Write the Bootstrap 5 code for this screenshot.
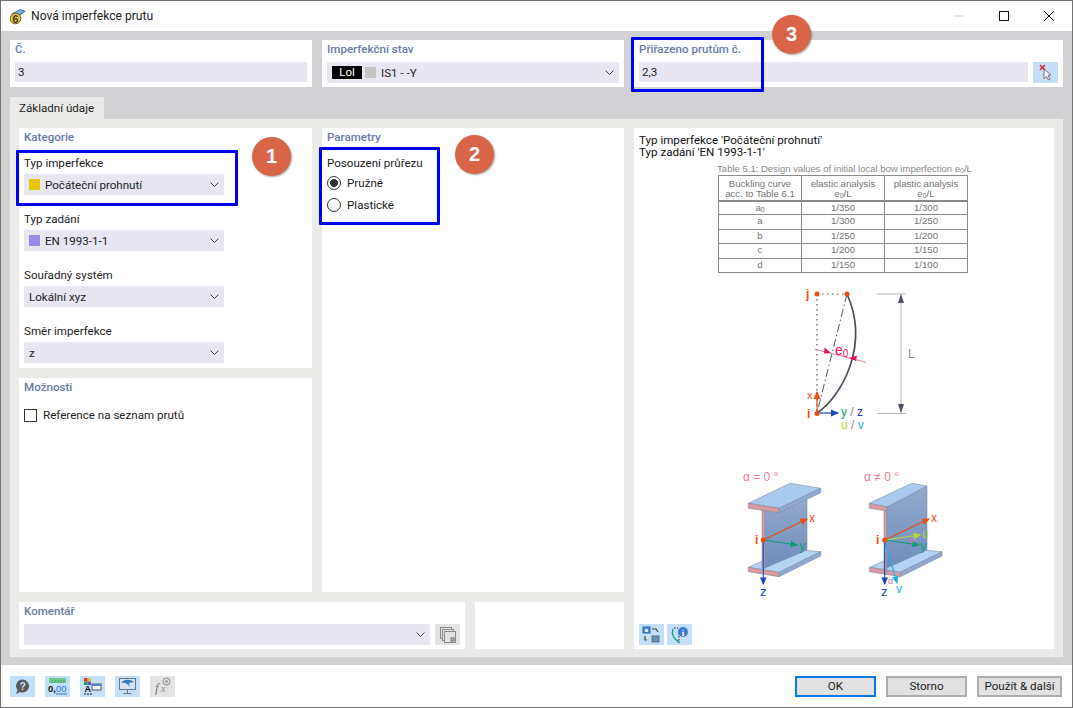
<!DOCTYPE html>
<html lang="cs">
<head>
  <meta charset="UTF-8" />
  <title>Nová imperfekce prutu</title>
  <link href="https://cdn.jsdelivr.net/npm/bootstrap@5.3.0/dist/css/bootstrap.min.css" rel="stylesheet"/>
  <style>
    html, body { margin: 0; background: #fff; }
    body { font-family: Roboto, "Noto Sans", sans-serif; font-size: 11.6px; line-height: 16px; color: #1c1c1c; }
    .win { position: relative; width: 1073px; height: 708px; border: 1px solid #737373; overflow: hidden; background: #fff; }

    .title-bar { height: 30px; padding-left: 9px; font-size: 12.1px; }
    .title-bar .ttl { margin-left: 3px; }
    .win-btns { margin-left: auto; margin-right: 18px; gap: 35px; }

    .main-area { height: 634px; background: #d2d2d5; padding: 9px 9px 8px 9px; }
    .top-grid { display: grid; grid-template-columns: 302px 302px 429px; gap: 10px; height: 47px; margin-bottom: 10px; }
    .pane { background: #fff; padding: 1px 5px 0 5px; }
    .pane-head { font-weight: 500; color: #6a7ba6; height: 16px; }
    .top-grid .pane-head { margin-bottom: 5px; }

    .tab-lbl { width: 94px; height: 22px; background: #ebebe9; padding-left: 9px; padding-top: 3px; }
    .tab-body { height: 538px; background: #ebebe9; padding: 9px; display: grid; grid-template-columns: 293px 302px 420px; grid-template-rows: 240px 214px 47px; gap: 10px; }
    .cell-cat { grid-column: 1; grid-row: 1; }
    .cell-opt { grid-column: 1; grid-row: 2; }
    .cell-par { grid-column: 2; grid-row: 1 / span 2; }
    .right-pane { grid-column: 3; grid-row: 1 / span 3; padding: 6px 4px 4px 5px; }
    .bottom-row { grid-column: 1 / span 2; grid-row: 3; display: grid; grid-template-columns: 446px 149px; gap: 10px; }

    .fld { background: #e7e6f1; height: 20px; min-height: 0; border: 0; border-radius: 0; padding: 0 3px; font-size: 11.6px; line-height: 20px; color: #1c1c1c; }
    .fld:focus { background: #e7e6f1; box-shadow: none; }
    .drop { background: #e7e6f1; height: 21px; padding: 0 5px; width: 200px; }
    .drop.wide { width: 100%; }
    .drop.full { width: 406px; }
    .drop svg.chev { margin-left: auto; }
    .swatch { width: 11px; height: 11px; margin-right: 5px; }
    .sw-yellow { background: #e6c700; }
    .sw-purple { background: #9c8ae8; }
    .sw-grey { background: #c4c4c2; }
    .lol-tag { background: #000; color: #fff; width: 30px; height: 13px; line-height: 13px; text-align: center; margin-right: 3px; }

    .grp-head { margin-bottom: 10px; }
    .fld-grp { margin-bottom: 16px; }
    .fld-lbl { height: 16px; margin-bottom: 3px; }

    .form-check.rf-check { min-height: 0; padding-left: 0; margin: 0; height: 22px; display: flex; align-items: center; }
    .rf-check .form-check-input { float: none; margin: 0 6px 0 0; width: 14px; height: 14px; border: 1px solid #333; background-color: #fff; flex: none; }
    .rf-check .form-check-input[type=radio]:checked { background-image: radial-gradient(circle, #333 0 3.6px, transparent 4.2px); border-color: #333; background-color: #fff; }
    .rf-check .form-check-label { line-height: 16px; }
    .rf-check .form-check-input[type=checkbox] { border-radius: 0; width: 13px; height: 13px; }
    .form-check.rf-check.opt-gap { margin-top: 9px; }
    .sec-lbl { height: 16px; margin-top: 10px; margin-bottom: 1px; }

    .ico-btn { width: 25px; height: 21px; background: #c3e0f8; flex: none; }
    .ico-btn.off { background: #e3e3e3; }

    .pick-row { gap: 5px; }
    .cmt-head { margin-bottom: 5px; }

    .info-line { line-height: 12px; color: #111; }
    .norm-cap { font-family: "Liberation Sans", sans-serif; font-size: 9.5px; line-height: 12px; color: #8a8a8a; text-align: center; margin-top: 5px; margin-bottom: 0; white-space: nowrap; }
    .norm-cap sub, .norm-tbl sub { font-size: 7px; bottom: -0.2em; }
    table.norm-tbl { width: 250px; margin: 0 0 0 79px; table-layout: fixed; font-family: "Liberation Sans", sans-serif; font-size: 9.6px; line-height: 11px; border-color: #8a8a8a; }
    table.norm-tbl > * > * > * { padding: 0; color: #757575; text-align: center; background: transparent; height: 14.4px; border: 1px solid #8a8a8a; line-height: 11px; }
    table.norm-tbl thead th { font-weight: 400; height: 25px; border-bottom-width: 2px; line-height: 10.5px; }
    .fig-wrap { margin-top: 8px; margin-left: 75px; height: 324px; }
    .fig-wrap svg { display: block; }
    .fig-tools { gap: 3px; margin-top: auto; }

    .foot-bar { height: 42px; padding: 0 10px 0 9px; }
    .foot-icons { gap: 10px; }
    .foot-btns { margin-left: auto; gap: 10px; }
    .btn.dlg-btn { width: 81px; height: 21px; padding: 0; border-radius: 0; background: #e1e1e1; border: 2px solid #adadad; font-size: 11.6px; line-height: 16px; color: #1c1c1c; }
    .btn.dlg-btn.pri { border-color: #0a78e6; }
    .btn.dlg-btn.nxt { width: 85px; }

    .mark-box { position: absolute; border: 3px solid #0000f0; border-radius: 1px; pointer-events: none; }
    .mark-1 { left: 15px; top: 149px; width: 222px; height: 56px; }
    .mark-2 { left: 318px; top: 146px; width: 121px; height: 78px; }
    .mark-3 { left: 630px; top: 36px; width: 133px; height: 55px; }
    .num-dot { position: absolute; width: 39px; height: 39px; border-radius: 50%; background: #d96548; color: #fff; font-family: "Liberation Sans", sans-serif; font-weight: 700; font-size: 20px; line-height: 38px; text-align: center; box-shadow: 1px 1px 2px rgba(90, 90, 90, .55); }
    .dot-1 { left: 251px; top: 136px; }
    .dot-2 { left: 454px; top: 134px; }
    .dot-3 { left: 771px; top: 14px; }
  </style>
</head>
<body>
<div class="win d-flex flex-column">

  <!-- title bar -->
  <div class="title-bar d-flex align-items-center">
    <svg width="18" height="17" viewBox="0 0 18 17">
      <path d="M1 6L10 1L16 3L8 9Z" fill="#3f78b5"/>
      <path d="M3 6L10 2L14 3.500L7 7.500Z" fill="#7fb0dc"/>
      <circle cx="5.500" cy="10.500" r="5.300" fill="#e6c93a" stroke="#6b5a10"/>
      <text x="5.500" y="14.500" font-size="10.500" font-weight="700" text-anchor="middle" fill="#3a3a20" font-family="Liberation Sans">6</text>
    </svg>
    <span class="ttl">Nová imperfekce prutu</span>
    <div class="win-btns d-flex align-items-center">
      <svg width="10" height="10" viewBox="0 0 10 10"><path d="M0 5H10" stroke="#cfcfcf"/></svg>
      <svg width="10" height="10" viewBox="0 0 10 10"><rect x=".5" y=".5" width="9" height="9" fill="none" stroke="#111"/></svg>
      <svg width="10" height="10" viewBox="0 0 10 10"><path d="M0 0L10 10M10 0L0 10" stroke="#111"/></svg>
    </div>
  </div>

  <div class="main-area">
    <!-- top fields -->
    <div class="top-grid">
      <div class="pane">
        <div class="pane-head">Č.</div>
        <input class="form-control fld" type="text" value="3">
      </div>
      <div class="pane">
        <div class="pane-head">Imperfekční stav</div>
        <div class="drop wide d-flex align-items-center">
          <span class="lol-tag">Lol</span><span class="swatch sw-grey"></span><span>IS1 - -Y</span>
          <svg class="chev" width="9" height="6" viewBox="0 0 9 6"><path d="M.5 .5L4.500 4.500L8.500 .5" fill="none" stroke="#444"/></svg>
        </div>
      </div>
      <div class="pane">
        <div class="pane-head">Přiřazeno prutům č.</div>
        <div class="d-flex pick-row">
          <input class="form-control fld flex-grow-1" type="text" value="2,3">
          <div class="ico-btn d-flex align-items-center justify-content-center">
            <svg width="17" height="17" viewBox="0 0 17 17">
              <path d="M7 5L7 15L9.500 12.500L11.500 16L13 15L11 11.500L14 11Z" fill="#f4f4f4" stroke="#777"/>
              <path d="M3 1L8 6M8 1L3 6" stroke="#e8202a" stroke-width="1.600"/>
            </svg>
          </div>
        </div>
      </div>
    </div>

    <div class="tab-lbl">Základní údaje</div>
    <div class="tab-body">

      <!-- category -->
      <div class="pane cell-cat">
        <div class="pane-head grp-head">Kategorie</div>
        <div class="fld-grp">
          <div class="fld-lbl">Typ imperfekce</div>
          <div class="drop d-flex align-items-center"><span class="swatch sw-yellow"></span><span>Počáteční prohnutí</span>
            <svg class="chev" width="9" height="6" viewBox="0 0 9 6"><path d="M.5 .5L4.500 4.500L8.500 .5" fill="none" stroke="#444"/></svg></div>
        </div>
        <div class="fld-grp">
          <div class="fld-lbl">Typ zadání</div>
          <div class="drop d-flex align-items-center"><span class="swatch sw-purple"></span><span>EN 1993-1-1</span>
            <svg class="chev" width="9" height="6" viewBox="0 0 9 6"><path d="M.5 .5L4.500 4.500L8.500 .5" fill="none" stroke="#444"/></svg></div>
        </div>
        <div class="fld-grp">
          <div class="fld-lbl">Souřadný systém</div>
          <div class="drop d-flex align-items-center"><span>Lokální xyz</span>
            <svg class="chev" width="9" height="6" viewBox="0 0 9 6"><path d="M.5 .5L4.500 4.500L8.500 .5" fill="none" stroke="#444"/></svg></div>
        </div>
        <div class="fld-grp">
          <div class="fld-lbl">Směr imperfekce</div>
          <div class="drop d-flex align-items-center"><span>z</span>
            <svg class="chev" width="9" height="6" viewBox="0 0 9 6"><path d="M.5 .5L4.500 4.500L8.500 .5" fill="none" stroke="#444"/></svg></div>
        </div>
      </div>

      <!-- parameters -->
      <div class="pane cell-par">
        <div class="pane-head">Parametry</div>
        <div class="sec-lbl">Posouzení průřezu</div>
        <div class="form-check rf-check">
          <input class="form-check-input" type="radio" name="posouzeni" id="pruzne" checked>
          <label class="form-check-label" for="pruzne">Pružné</label>
        </div>
        <div class="form-check rf-check">
          <input class="form-check-input" type="radio" name="posouzeni" id="plasticke">
          <label class="form-check-label" for="plasticke">Plastické</label>
        </div>
      </div>

      <!-- preview -->
      <div class="pane right-pane d-flex flex-column">
        <div class="info-line">Typ imperfekce 'Počáteční prohnutí'</div>
        <div class="info-line">Typ zadání 'EN 1993-1-1'</div>
        <p class="norm-cap">Table 5.1: Design values of initial local bow imperfection e<sub>0</sub>/L</p>
        <table class="table table-bordered norm-tbl">
          <thead>
            <tr><th>Buckling curve<br>acc. to Table 6.1</th><th>elastic analysis<br>e<sub>0</sub>/L</th><th>plastic analysis<br>e<sub>0</sub>/L</th></tr>
          </thead>
          <tbody>
            <tr><td>a<sub>0</sub></td><td>1/350</td><td>1/300</td></tr>
            <tr><td>a</td><td>1/300</td><td>1/250</td></tr>
            <tr><td>b</td><td>1/250</td><td>1/200</td></tr>
            <tr><td>c</td><td>1/200</td><td>1/150</td></tr>
            <tr><td>d</td><td>1/150</td><td>1/100</td></tr>
          </tbody>
        </table>
        <div class="fig-wrap">
          <svg width="260" height="324" viewBox="714 281 260 324" font-family="Liberation Sans, sans-serif">
            <defs>
              <linearGradient id="webFill" x1="0" y1="0" x2="0" y2="1"><stop offset="0" stop-color="#93aacb"/><stop offset="1" stop-color="#6f8cbb"/></linearGradient>
              <g id="lowFlange" stroke="#7d8ba3" stroke-width=".6">
                <path d="M748.300 567.300L790 549L820.700 551.700L779 572.300Z" fill="#b5d3f2"/>
                <path d="M779 572.300L820.700 551.700V556L779 576.700Z" fill="#8fa9d0"/>
                <path d="M748.300 567.300L779 572.300V576.700L748.300 571.700Z" fill="#dd98a0"/>
              </g>
              <marker id="aO" markerWidth="7" markerHeight="6" refX="6" refY="3" orient="auto"><path d="M0 0L7 3L0 6Z" fill="#f04a10"/></marker>
              <marker id="aB" markerWidth="7" markerHeight="6" refX="6" refY="3" orient="auto"><path d="M0 0L7 3L0 6Z" fill="#1548c0"/></marker>
              <marker id="aG" markerWidth="7" markerHeight="6" refX="6" refY="3" orient="auto"><path d="M0 0L7 3L0 6Z" fill="#0f9c78"/></marker>
              <marker id="aC" markerWidth="7" markerHeight="6" refX="6" refY="3" orient="auto"><path d="M0 0L7 3L0 6Z" fill="#10b4f0"/></marker>
              <marker id="aY" markerWidth="7" markerHeight="6" refX="6" refY="3" orient="auto"><path d="M0 0L7 3L0 6Z" fill="#b4dc30"/></marker>
            </defs>

            <!-- bow -->
            <path d="M817 294H847M817 294V413" fill="none" stroke="#555" stroke-width="1.200" stroke-dasharray="1.500 3.500"/>
            <path d="M847 294L817 413" fill="none" stroke="#555" stroke-width="1" stroke-dasharray="8 3 1.500 3"/>
            <path d="M817 413C842 396 870 345 847 294" fill="none" stroke="#4e4e60" stroke-width="1.700"/>
            <path d="M815 349.300L866 362.300" stroke="#f0608a" stroke-width=".8"/>
            <path d="M831 353L824.500 347.500L824 353.500Z M849 358L857 355.500L856 361Z" fill="#f0105a"/>
            <text x="835" y="355" font-size="14" fill="#f0105a">e<tspan font-size="10" dy="2">0</tspan></text>
            <path d="M877 294H906M877 413.500H906M901 294V413" stroke="#b5b5b8" stroke-width="1" fill="none"/>
            <path d="M901 294L898 303H904ZM901 413L898 404H904Z" fill="#4f5066"/>
            <text x="908" y="358" font-size="12" fill="#888">L</text>
            <path d="M817 413V392" stroke="#f04a10" stroke-width="1.200" marker-end="url(#aO)"/>
            <path d="M817 413H838" stroke="#1548c0" stroke-width="1.200" marker-end="url(#aB)"/>
            <circle cx="817" cy="294" r="2.500" fill="#f04a10"/>
            <circle cx="847" cy="294" r="2.500" fill="#f04a10"/>
            <circle cx="817" cy="413.500" r="2.500" fill="#f04a10"/>
            <text x="806" y="298" font-size="12" font-weight="700" fill="#f04a10">j</text>
            <text x="807" y="399" font-size="11" fill="#f04a10">x</text>
            <text x="807" y="418" font-size="12" font-weight="700" fill="#f04a10">i</text>
            <text x="841" y="416" font-size="12"><tspan fill="#0f9c78">y</tspan><tspan fill="#888"> / </tspan><tspan fill="#1548c0">z</tspan></text>
            <text x="841" y="429" font-size="12"><tspan fill="#b4dc30">u</tspan><tspan fill="#888"> / </tspan><tspan fill="#10b4f0">v</tspan></text>

            <!-- beam a = 0 -->
            <text x="743" y="481" font-size="12" fill="#ea7c92">α = 0 °</text>
            <use href="#lowFlange"/>
            <g stroke="#7d8ba3" stroke-width=".6">
              <path d="M764.700 510L807 497V550L764.700 568Z" fill="url(#webFill)"/>
              <path d="M762 510H764.700V568.500L762 568Z" fill="#dd98a0"/>
              <path d="M748.300 503.300L790 483.300L820.700 488.300L779 508.300Z" fill="#a9caec"/>
              <path d="M779 508.300L820.700 488.300V492.700L779 512.700Z" fill="#8fa9d0"/>
              <path d="M748.300 503.300L779 508.300V512.700L748.300 508.300Z" fill="#dd98a0"/>
            </g>
            <path d="M763.300 540L807 519" stroke="#f04a10" stroke-width="1.100" marker-end="url(#aO)"/>
            <path d="M763.300 540L797 545" stroke="#0f9c78" stroke-width="1.100" marker-end="url(#aG)"/>
            <path d="M763.300 540V584" stroke="#1548c0" stroke-width="1.100" marker-end="url(#aB)"/>
            <circle cx="763.300" cy="540" r="2.500" fill="#f04a10"/>
            <text x="755" y="544" font-size="12" font-weight="700" fill="#f04a10">i</text>
            <text x="809" y="522" font-size="12" fill="#f04a10">x</text>
            <text x="799" y="550" font-size="13" fill="#0f9c78">y</text>
            <text x="760" y="596" font-size="13" fill="#1548c0">z</text>

            <!-- beam a != 0 -->
            <text x="864" y="481" font-size="12" fill="#ea7c92">α ≠ 0 °</text>
            <use href="#lowFlange" x="121.300"/>
            <g stroke="#7d8ba3" stroke-width=".6">
              <path d="M886.700 507L927 486V550L886.700 568Z" fill="url(#webFill)"/>
              <path d="M884 510H886.700V574.500L884 574Z" fill="#dd98a0"/>
              <path d="M869.300 503.300L911.700 483.300L927 486L886.700 507Z" fill="#a9caec"/>
              <path d="M869.300 503.300L886.700 507V511L869.300 508.300Z" fill="#dd98a0"/>
            </g>
            <path d="M884.700 540L929 519" stroke="#f04a10" stroke-width="1.100" marker-end="url(#aO)"/>
            <path d="M884.700 540L920 535" stroke="#b4dc30" stroke-width="1.100" marker-end="url(#aY)"/>
            <path d="M884.700 540L919 545" stroke="#0f9c78" stroke-width="1.100" marker-end="url(#aG)"/>
            <path d="M884.700 540L897 583" stroke="#10b4f0" stroke-width="1.100" marker-end="url(#aC)"/>
            <path d="M884.700 540V584" stroke="#1548c0" stroke-width="1.100" marker-end="url(#aB)"/>
            <circle cx="884.700" cy="540" r="2.500" fill="#f04a10"/>
            <text x="876" y="544" font-size="12" font-weight="700" fill="#f04a10">i</text>
            <text x="931" y="522" font-size="12" fill="#f04a10">x</text>
            <text x="922" y="538" font-size="12" fill="#b4dc30">u</text>
            <text x="920" y="550" font-size="13" fill="#0f9c78">y</text>
            <text x="909" y="543" font-size="9" fill="#d9709a">α</text>
            <text x="888" y="584" font-size="9" fill="#d9709a">α</text>
            <text x="881" y="596" font-size="13" fill="#1548c0">z</text>
            <text x="896" y="593" font-size="12" fill="#10b4f0">v</text>
          </svg>
        </div>
        <div class="fig-tools d-flex">
          <div class="ico-btn d-flex align-items-center justify-content-center">
            <svg width="19" height="17" viewBox="0 0 19 17">
              <rect x="1" y="1" width="7" height="6" fill="#4f86d8" stroke="#2e62b0"/><rect x="3" y="3" width="3" height="3" fill="#dbe8fa"/>
              <rect x="10" y="10" width="7" height="6" fill="#6c8bb2" stroke="#55708f"/>
              <path d="M10 3h4l2 3M5 14H3V10" fill="none" stroke="#444" stroke-width="1.200"/>
            </svg>
          </div>
          <div class="ico-btn d-flex align-items-center justify-content-center">
            <svg width="19" height="18" viewBox="0 0 19 18">
              <path d="M3 3C1 8 4 13 9 16" fill="none" stroke="#0f9c78" stroke-width="1.500"/>
              <path d="M4 2H8M9 4V17" fill="none" stroke="#222" stroke-dasharray="1.500 1.500"/>
              <circle cx="13" cy="6" r="5" fill="#3f78d8"/>
              <text x="13" y="9.500" font-size="9" font-weight="700" text-anchor="middle" fill="#fff" font-family="Liberation Serif">i</text>
            </svg>
          </div>
        </div>
      </div>

      <!-- options -->
      <div class="pane cell-opt">
        <div class="pane-head">Možnosti</div>
        <div class="form-check rf-check opt-gap">
          <input class="form-check-input" type="checkbox" id="refSeznam">
          <label class="form-check-label" for="refSeznam">Reference na seznam prutů</label>
        </div>
      </div>

      <!-- comment -->
      <div class="bottom-row">
        <div class="pane">
          <div class="pane-head cmt-head">Komentář</div>
          <div class="d-flex pick-row">
            <div class="drop full d-flex align-items-center">
              <svg class="chev" width="9" height="6" viewBox="0 0 9 6"><path d="M.5 .5L4.500 4.500L8.500 .5" fill="none" stroke="#444"/></svg>
            </div>
            <div class="ico-btn off d-flex align-items-center justify-content-center">
              <svg width="16" height="16" viewBox="0 0 16 16" fill="#e3e3e3" stroke="#8a8a8a">
                <rect x=".5" y=".5" width="11" height="11"/><rect x="2.500" y="2.500" width="11" height="11"/><rect x="4.500" y="4.500" width="11" height="11"/>
                <rect x="11" y="11" width="3" height="3" fill="#bbb" stroke="#777"/>
              </svg>
            </div>
          </div>
        </div>
        <div class="pane"></div>
      </div>
    </div>
  </div>

  <!-- footer -->
  <div class="foot-bar d-flex align-items-center">
    <div class="foot-icons d-flex">
      <div class="ico-btn d-flex align-items-center justify-content-center">
        <svg width="17" height="17" viewBox="0 0 17 17">
          <path d="M8.500 1.500A6.500 6.500 0 1 1 6 14L2 16L3.500 12A6.500 6.500 0 0 1 8.500 1.500Z" fill="#5a5a5a"/>
          <text x="8.700" y="12" font-size="10.500" font-weight="700" text-anchor="middle" fill="#c3e0f8" font-family="Liberation Sans">?</text>
        </svg>
      </div>
      <div class="ico-btn d-flex align-items-center justify-content-center">
        <svg width="19" height="18" viewBox="0 0 19 18">
          <rect x="1" y="1" width="17" height="5" fill="#6fc98a"/>
          <path d="M4 3V6M7 3V6M10 3V6M13 3V6M16 3V6" stroke="#3b9a5a" stroke-width=".7"/>
          <text x="0" y="15" font-size="9.500" font-weight="700" fill="#111" font-family="Liberation Sans">0,</text>
          <text x="8" y="15" font-size="9.500" fill="#2f6fe0" font-family="Liberation Sans">00</text>
          <path d="M8 17H19" stroke="#2f6fe0"/>
        </svg>
      </div>
      <div class="ico-btn d-flex align-items-center justify-content-center">
        <svg width="18" height="18" viewBox="0 0 18 18">
          <rect x="0" y="1" width="3.500" height="3.500" fill="#d83030"/><rect x="3.500" y="1" width="3.500" height="3.500" fill="#e0c020"/>
          <rect x="0" y="4.500" width="3.500" height="3.500" fill="#30a040"/><rect x="3.500" y="4.500" width="3.500" height="3.500" fill="#6a50c8"/>
          <rect x="8" y="7" width="9" height="6" fill="#f4f4f4" stroke="#555"/><rect x="8" y="7" width="9" height="2" fill="#4f86d8"/>
          <text x="0.500" y="15" font-size="9" font-weight="700" fill="#111" font-family="Liberation Sans">A</text>
          <path d="M0 17H2M3 17H5M6 17H8" stroke="#111"/>
        </svg>
      </div>
      <div class="ico-btn d-flex align-items-center justify-content-center">
        <svg width="19" height="18" viewBox="0 0 19 18">
          <rect x="1.500" y="1.500" width="16" height="11" fill="#d5e4f4" stroke="#6a7786"/>
          <path d="M3 6C6 2 12 2 16 5L11 6L12 10C10 7 7 5 3 6Z" fill="#3f78b5"/>
          <path d="M9.500 13V16M5.500 16.500H13.500" stroke="#6a7786"/>
        </svg>
      </div>
      <div class="ico-btn off d-flex align-items-center justify-content-center">
        <svg width="18" height="18" viewBox="0 0 18 18">
          <text x="1" y="15" font-size="13" font-style="italic" fill="#777" font-family="Liberation Serif">f</text>
          <text x="7" y="15" font-size="10" font-style="italic" fill="#888" font-family="Liberation Serif">x</text>
          <circle cx="12.500" cy="4.500" r="3.500" fill="none" stroke="#888"/>
          <circle cx="12.500" cy="4.500" r="1.200" fill="#888"/>
        </svg>
      </div>
    </div>
    <div class="foot-btns d-flex">
      <button type="button" class="btn dlg-btn pri">OK</button>
      <button type="button" class="btn dlg-btn">Storno</button>
      <button type="button" class="btn dlg-btn nxt">Použít &amp; další</button>
    </div>
  </div>

  <!-- numbered callouts on top of the dialog -->
  <div class="mark-box mark-1"></div>
  <div class="mark-box mark-2"></div>
  <div class="mark-box mark-3"></div>
  <div class="num-dot dot-1">1</div>
  <div class="num-dot dot-2">2</div>
  <div class="num-dot dot-3">3</div>
</div>
<script src="https://cdn.jsdelivr.net/npm/bootstrap@5.3.0/dist/js/bootstrap.bundle.min.js"></script>
</body>
</html>
